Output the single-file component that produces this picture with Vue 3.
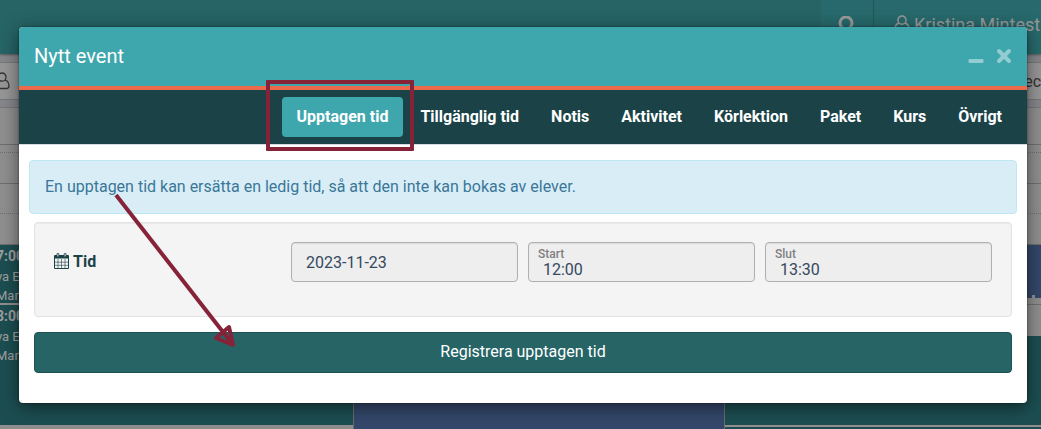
<template>
  <div class="page">
    <div class="backdrop">
      <header class="topbar">
        <button class="topbar__search" aria-label="Sök">
          <svg width="18" height="18" viewBox="0 0 18 18">
            <circle cx="8" cy="7" r="6" fill="none" stroke="currentColor" stroke-width="3" />
            <path d="M12 11l5 6" stroke="currentColor" stroke-width="3" />
          </svg>
        </button>
        <a href="#" class="topbar__user">
          <svg width="16" height="18" viewBox="0 0 16 18">
            <path :d="userPath" fill="none" stroke="currentColor" stroke-width="1.5" />
          </svg>
          <span>Kristina Mintest</span>
        </a>
      </header>
      <div class="toolbar">
        <svg width="16" height="18" viewBox="0 0 16 18">
          <path :d="userPath" fill="none" stroke="currentColor" stroke-width="1.3" />
        </svg>
        <span class="toolbar__end">ec</span>
      </div>
      <div class="calendar">
        <div class="calendar__column">
          <div v-for="n in 5" :key="n" class="slot"></div>
          <div v-for="item in bookings" :key="item.time" class="booking">
            <b>{{ item.time }}</b>
            <span>{{ item.name }}</span>
            <span>{{ item.teacher }}</span>
          </div>
        </div>
        <div class="calendar__column calendar__column--blue"></div>
        <div class="calendar__column calendar__column--right">
          <div v-for="n in 5" :key="n" class="slot"></div>
          <div class="booking booking--blue"></div>
          <div class="slot slot--gap"></div>
          <div class="booking booking--tall"></div>
          <div class="booking booking--last"></div>
        </div>
      </div>
    </div>

    <div class="overlay">
      <section class="modal" role="dialog" aria-labelledby="modal-title">
        <div class="modal__header">
          <h1 id="modal-title" class="modal__title">Nytt event</h1>
          <div class="modal__tools">
            <button class="modal__tool" aria-label="Minimera">
              <svg width="16" height="16" viewBox="0 0 16 16">
                <rect x="0.5" y="11" width="15" height="4" rx="1" fill="currentColor" />
              </svg>
            </button>
            <button class="modal__tool" aria-label="Stäng">
              <svg width="16" height="16" viewBox="0 0 16 16">
                <path d="M3 3l10 10M13 3L3 13" stroke="currentColor" stroke-width="4" stroke-linecap="round" />
              </svg>
            </button>
          </div>
        </div>

        <nav class="tabs">
          <button
            v-for="tab in tabs"
            :key="tab"
            class="tabs__item"
            :class="{ 'tabs__item--active': tab === activeTab }"
            @click="activeTab = tab"
          >
            {{ tab }}
            <span v-if="tab === tabs[0]" class="tabs__marker"></span>
          </button>
        </nav>

        <div class="modal__body">
          <p class="alert">
            En upptagen tid kan ersätta en ledig tid, så att den inte kan bokas av elever.
          </p>
          <form class="form" @submit.prevent>
            <div class="form__row">
              <label class="form__label" for="date">
                <svg width="15" height="16" viewBox="0 0 15 16">
                  <path d="M1 2.5h13v3H1z" fill="currentColor" />
                  <path
                    d="M.5 2.5h14v13H.5z"
                    fill="none"
                    stroke="currentColor"
                    stroke-width="1"
                  />
                  <path
                    d="M.5 9.2h14M.5 12.3h14M4 6v9.5M7.5 6v9.5M11 6v9.5"
                    fill="none"
                    stroke="currentColor"
                    stroke-width="0.6"
                  />
                  <path
                    d="M3 .6h1.8v3.2H3zM10.2 .6H12v3.2h-1.8z"
                    fill="#f4f4f4"
                    stroke="currentColor"
                    stroke-width="0.8"
                  />
                </svg>
                Tid
              </label>
              <div class="field">
                <input id="date" v-model="date" class="field__input" type="text" />
              </div>
              <div class="field field--labelled">
                <label class="field__label" for="start">Start</label>
                <input id="start" v-model="start" class="field__input" type="text" />
              </div>
              <div class="field field--labelled">
                <label class="field__label" for="end">Slut</label>
                <input id="end" v-model="end" class="field__input" type="text" />
              </div>
            </div>
            <button class="form__submit" type="submit">Registrera upptagen tid</button>
          </form>
        </div>

        <svg class="arrow" width="130" height="162" viewBox="0 0 130 162">
          <path d="M4 4l114 146" />
          <path d="M104 147l13-11 4 18z" />
        </svg>
      </section>
    </div>
  </div>
</template>

<script setup>
import { ref } from "vue";

const tabs = [
  "Upptagen tid",
  "Tillgänglig tid",
  "Notis",
  "Aktivitet",
  "Körlektion",
  "Paket",
  "Kurs",
  "Övrigt",
];
const activeTab = ref("Upptagen tid");

const date = ref("2023-11-23");
const start = ref("12:00");
const end = ref("13:30");

// Bookings behind the dialog
const bookings = [
  { time: "7:00", name: "ya E", teacher: "Man" },
  { time: "8:00", name: "ya E", teacher: "Man" },
];

const userPath =
  "M8 1a4 4 0 0 1 4 4.200a4 4 0 0 1-8 0A4 4 0 0 1 8 1zM4.800 8C2.500 9 1 11 1 14c0 2 1 2.500 2.500 2.500h9c1.500 0 2.500-.5 2.500-2.500 0-3-1.500-5-3.800-6";
</script>

<style>
body {
  margin: 0;
}
</style>

<style scoped>
* {
  box-sizing: border-box;
}

.page {
  position: relative;
  min-height: 100vh;
  overflow: hidden;
  font-family: Roboto, "Liberation Sans", sans-serif;
  font-size: 16px;
}

button,
input {
  font: inherit;
}

/* Page behind the dialog */
.backdrop {
  position: absolute;
  inset: 0;
  display: flex;
  flex-direction: column;
  background: #85878c;
}

.topbar {
  display: flex;
  justify-content: flex-end;
  flex: none;
  height: 54px;
  background: #266466;
  box-shadow: 0 1px 2px #555;
}

.topbar__search {
  width: 52px;
  padding: 0;
  border: none;
  background: #27696c;
  color: #999;
}

.topbar__user {
  display: flex;
  align-items: center;
  gap: 4px;
  width: 168px;
  padding: 0 0 6px 20px;
  border-left: 1px solid #1f5759;
  background: #27696c;
  color: #999;
  font-size: 18px;
  text-decoration: none;
  white-space: nowrap;
}

.topbar__user svg {
  flex: none;
}

.toolbar {
  display: flex;
  align-items: center;
  justify-content: space-between;
  flex: none;
  height: 38px;
  margin: 8px 0 7px -6px;
  border-top: 1px solid #777;
  border-bottom: 1px solid #777;
  background: #969696;
  color: #333;
}

.calendar {
  display: grid;
  grid-template-columns: 353px 1fr 316px;
  flex: 1;
  border-top: 1px solid #777;
  background: #8f8f8f;
}

.calendar__column {
  color: #a0a0a0;
  font-size: 13px;
  line-height: 19px;
}

.calendar__column--blue {
  border-left: 1px solid #6d6d6d;
  border-right: 1px solid #6d6d6d;
  background: #34486b;
}

.slot {
  height: 31px;
  border-bottom: 1px solid #6f6f6f;
}

.slot:nth-child(1) {
  height: 37px;
}

.slot:nth-child(2) {
  height: 8px;
}

.slot:nth-child(4) {
  height: 30px;
}

.slot:nth-child(even) {
  border-bottom-style: dotted;
}

.booking {
  display: flex;
  flex-direction: column;
  height: 60px;
  margin-left: -4px;
  border-bottom: 2px solid #8f8f8f;
  background: #1c4e51;
}

.booking:last-child {
  height: 122px;
}

.booking b {
  font-size: 14px;
  line-height: 22px;
}

.calendar__column--right .booking {
  margin-left: 0;
}

.calendar__column--right .booking--blue {
  height: 53px;
  border-bottom: 3px dashed #34486b;
  background: #34486b;
  background-clip: padding-box;
}

.calendar__column--right .slot--gap {
  height: 7px;
  margin-bottom: 31px;
}

.calendar__column--right .booking--tall {
  height: 91px;
}

.calendar__column--right .booking--last {
  height: 10px;
}

/* Dialog */
.overlay {
  position: relative;
  padding: 27px 14px 26px 19px;
}

.modal {
  position: relative;
  border-radius: 4px;
  background: #fff;
  box-shadow: 0 4px 18px rgba(0, 0, 0, 0.5), 0 0 2px rgba(0, 0, 0, 0.6);
}

.modal__header {
  display: flex;
  align-items: center;
  justify-content: space-between;
  height: 63px;
  padding: 0 15px 2px;
  border-bottom: 4px solid #ec694c;
  border-radius: 4px 4px 0 0;
  background: #3ea6ad;
}

.modal__title {
  margin: 0;
  color: #fff;
  font-size: 20px;
  font-weight: 400;
}

.modal__tools {
  display: flex;
  gap: 12px;
}

.modal__tool {
  display: flex;
  padding: 0;
  border: none;
  background: none;
  color: #91cdd1;
  cursor: pointer;
}

.tabs {
  display: flex;
  justify-content: flex-end;
  gap: 2px;
  padding: 7px 10px;
  border-bottom: 1px solid #d5dbe2;
  background: #1b4347;
}

.tabs__item {
  position: relative;
  height: 40px;
  padding: 0 15px 2px;
  border: none;
  border-radius: 4px;
  background: none;
  color: #fff;
  font-weight: 700;
  white-space: nowrap;
  cursor: pointer;
}

.tabs__item--active {
  background: #3ea6ad;
}

.tabs__marker {
  position: absolute;
  inset: -17px -11px -14px -16px;
  border: 4px solid #862339;
  border-radius: 1px;
  pointer-events: none;
}

.modal__body {
  padding: 15px 10px 30px;
}

.alert {
  margin: 0 0 8px;
  padding: 14px 15px;
  border: 1px solid #bce8f1;
  border-radius: 4px;
  background: #d9edf7;
  color: #3a7798;
  line-height: 24px;
}

.form {
  padding: 0 5px;
}

.form__row {
  display: grid;
  grid-template-columns: repeat(4, 1fr);
  gap: 10px;
  margin-bottom: 15px;
  padding: 19px 19px 34px;
  border: 1px solid #e3e3e3;
  border-radius: 4px;
  background: #f4f4f4;
  box-shadow: inset 0 1px 1px rgba(0, 0, 0, 0.05);
}

.form__label {
  display: flex;
  align-items: center;
  gap: 4px;
  padding-bottom: 2px;
  color: #1b4347;
  font-weight: 700;
}

.field {
  display: flex;
  flex-direction: column;
  height: 40px;
  border: 1px solid #b0b0b0;
  border-radius: 4px;
  background: #eee;
  box-shadow: inset 0 1px 1px rgba(0, 0, 0, 0.08);
}

.field__label {
  padding: 4px 9px 0;
  color: #808080;
  font-size: 12px;
  font-weight: 500;
  line-height: 14px;
}

.field__input {
  flex: 1;
  width: 100%;
  min-height: 0;
  padding: 0 14px;
  border: none;
  background: none;
  color: #34495e;
  outline: none;
}

.field--labelled .field__input {
  flex: none;
  height: 16px;
  line-height: 16px;
}

.form__submit {
  width: 100%;
  height: 41px;
  padding: 0 0 2px;
  border: 1px solid #1d5254;
  border-radius: 4px;
  background: #266466;
  color: #fff;
  cursor: pointer;
}

/* Pointer drawn over the dialog */
.arrow {
  position: absolute;
  top: 164px;
  left: 93px;
  fill: none;
  stroke: #862339;
  stroke-width: 4;
  stroke-linejoin: round;
  pointer-events: none;
}
</style>
